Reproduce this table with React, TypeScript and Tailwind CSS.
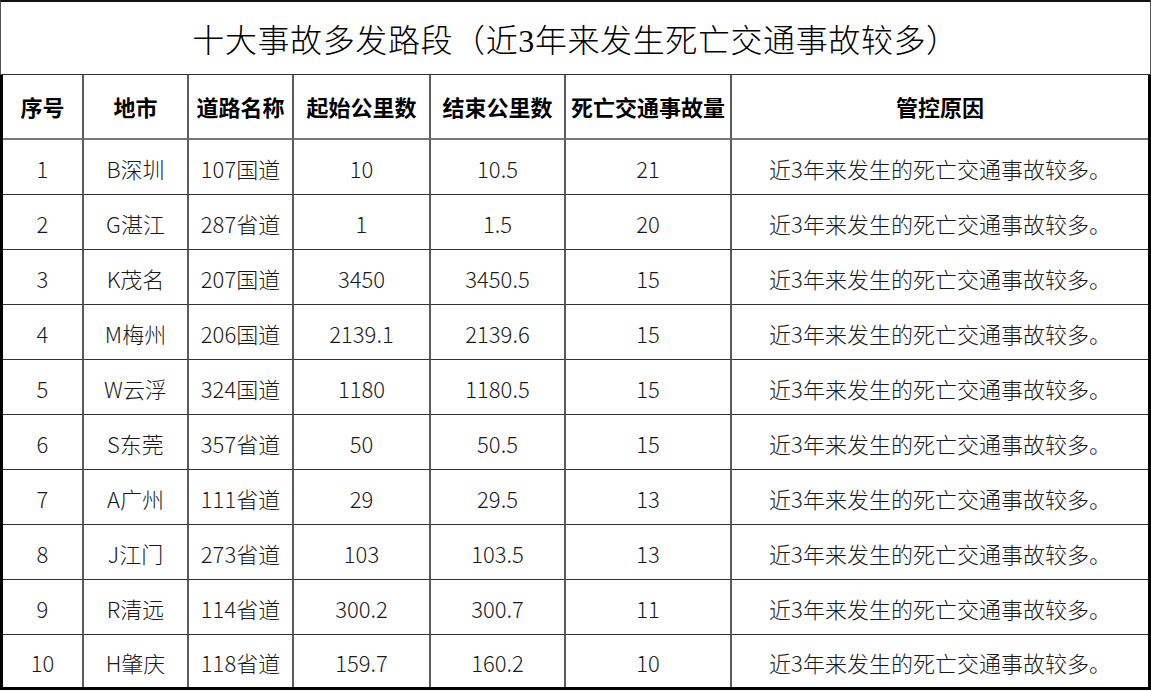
const rows = [
  ["1", "B深圳", "107国道", "10", "10.5", "21"],
  ["2", "G湛江", "287省道", "1", "1.5", "20"],
  ["3", "K茂名", "207国道", "3450", "3450.5", "15"],
  ["4", "M梅州", "206国道", "2139.1", "2139.6", "15"],
  ["5", "W云浮", "324国道", "1180", "1180.5", "15"],
  ["6", "S东莞", "357省道", "50", "50.5", "15"],
  ["7", "A广州", "111省道", "29", "29.5", "13"],
  ["8", "J江门", "273省道", "103", "103.5", "13"],
  ["9", "R清远", "114省道", "300.2", "300.7", "11"],
  ["10", "H肇庆", "118省道", "159.7", "160.2", "10"],
];

const headers = ["序号", "地市", "道路名称", "起始公里数", "结束公里数", "死亡交通事故量", "管控原因"];

const reason = "近3年来发生的死亡交通事故较多。";

export default function App() {
  return (
    <div
      className="w-[1151px] h-[691px] bg-white text-[#1a1a1a]"
      style={{ fontFamily: '"Noto Sans CJK SC", "Noto Sans", sans-serif' }}
    >
      {/* title */}
      <div className="h-[75px] flex items-center justify-center pt-1.5 border-t-2 border-t-[#111] border-x border-x-[#555] border-b border-b-[#333]">
        <h1
          className="text-[32px] leading-none text-black tracking-[0.6px] font-light"
          style={{ fontFamily: '"Liberation Serif", "Noto Sans CJK SC", serif' }}
        >
          十大事故多发路段（近3年来发生死亡交通事故较多）
        </h1>
      </div>

      {/* table */}
      <div className="grid grid-cols-[81px_105px_105px_137px_135px_166px_1fr] border-x-[3px] border-b-[3px] border-black">
        {headers.map((h, i) => (
          <div
            key={h}
            className={`h-[65px] flex items-center justify-center text-[22px] font-bold text-black border-b-2 border-b-[#777] ${
              i < 6 ? "border-r-2 border-r-[#5c5c5c]" : ""
            }`}
          >
            {h}
          </div>
        ))}
        {rows.map((r, ri) =>
          [...r, reason].map((c, ci) => (
            <div
              key={ri + "-" + ci}
              className={`flex items-center justify-center text-[22px] font-light pt-0.5 ${
                ri < rows.length - 1 ? "h-[55px] border-b border-b-[#333]" : "h-[52px]"
              } ${ci < 6 ? "border-r-2 border-r-[#5c5c5c]" : ""}`}
            >
              {c}
            </div>
          ))
        )}
      </div>
    </div>
  );
}
